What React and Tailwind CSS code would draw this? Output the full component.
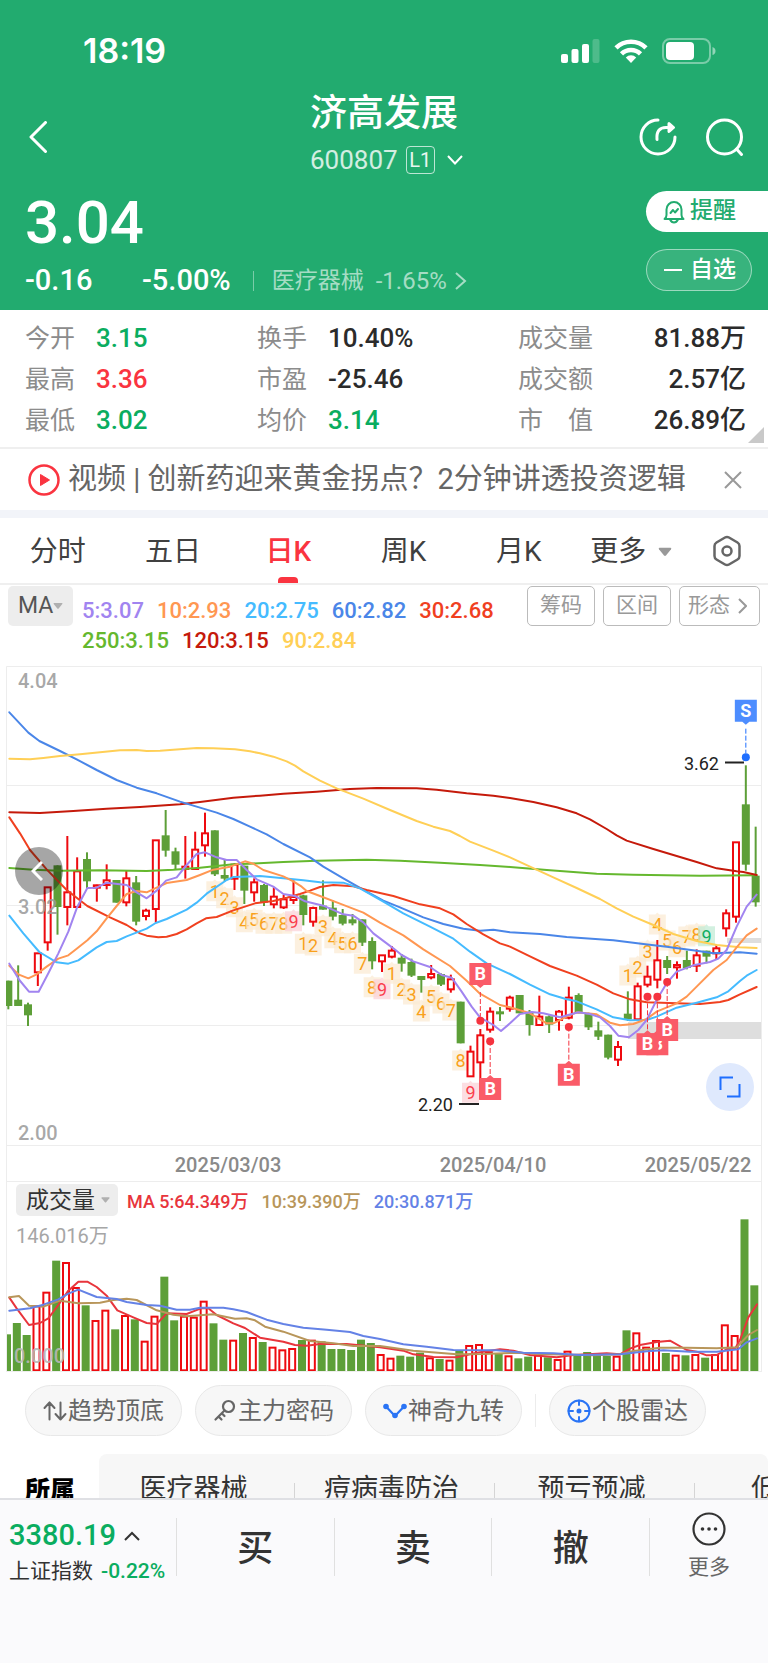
import React, { useState } from "react";

const FONT = "font-['Roboto','Noto_Sans_CJK_SC',sans-serif]";

// Chart data. All points are in thirds of a chart unit.
// [up, high, body top, body bottom, low, volume top]
const candles = [
  [0, 962, 962, 1038, 1048, 553], [0, 916, 1019, 1038, 1038, 519], [0, 1028, 1033, 1066, 1098, 555],
  [1, 880, 880, 937, 978, 466], [1, 682, 682, 847, 872, 425], [0, 616, 616, 741, 824, 332],
  [1, 528, 697, 741, 796, 336], [1, 592, 634, 741, 741, 411], [0, 577, 597, 664, 684, 466],
  [1, 674, 676, 683, 725, 510], [1, 613, 661, 675, 688, 479], [0, 660, 660, 728, 728, 538],
  [1, 633, 655, 727, 739, 495], [0, 648, 667, 785, 796, 508], [1, 746, 752, 768, 781, 572],
  [1, 541, 541, 747, 788, 497], [0, 450, 526, 572, 590, 380], [0, 563, 574, 614, 628, 511],
  [1, 528, 620, 627, 656, 497], [1, 515, 569, 627, 627, 500], [1, 458, 520, 556, 590, 452],
  [0, 511, 511, 643, 648, 520], [0, 600, 645, 656, 664, 569], [1, 610, 614, 656, 690, 569],
  [0, 617, 617, 692, 732, 549], [1, 655, 667, 697, 725, 561], [0, 672, 675, 728, 738, 576],
  [1, 682, 710, 733, 745, 590], [1, 705, 718, 742, 747, 598], [1, 661, 711, 720, 732, 594],
  [0, 704, 706, 765, 796, 570], [1, 740, 744, 785, 800, 569], [0, 661, 737, 749, 749, 574],
  [0, 721, 743, 770, 781, 597], [0, 747, 765, 791, 796, 597], [0, 762, 778, 790, 796, 600],
  [0, 778, 778, 848, 858, 569], [0, 832, 843, 904, 928, 579], [1, 886, 886, 904, 936, 612],
  [1, 858, 872, 890, 895, 623], [0, 882, 893, 911, 935, 617], [0, 896, 906, 947, 951, 620],
  [0, 948, 948, 960, 998, 608], [1, 915, 942, 952, 958, 622], [0, 940, 942, 974, 978, 627],
  [1, 944, 958, 988, 998, 629], [0, 1025, 1025, 1150, 1150, 602], [1, 1157, 1175, 1249, 1249, 585],
  [1, 1107, 1126, 1207, 1318, 582], [1, 1042, 1055, 1109, 1118, 604], [0, 1041, 1054, 1063, 1083, 610],
  [1, 1007, 1013, 1046, 1055, 616], [0, 1005, 1005, 1060, 1060, 625], [0, 1050, 1058, 1095, 1127, 620],
  [1, 1007, 1070, 1095, 1098, 614], [0, 1066, 1069, 1094, 1119, 622], [1, 1050, 1055, 1080, 1112, 627],
  [1, 980, 1013, 1073, 1078, 602], [0, 1000, 1005, 1060, 1060, 612], [0, 1058, 1062, 1102, 1110, 606],
  [0, 1085, 1111, 1130, 1140, 615], [0, 1124, 1124, 1193, 1198, 618], [1, 1143, 1161, 1199, 1218, 617],
  [0, 994, 1061, 1078, 1083, 541], [1, 968, 979, 1078, 1078, 547], [1, 917, 950, 974, 982, 590],
  [1, 840, 901, 959, 985, 570], [0, 888, 900, 924, 942, 609], [1, 904, 915, 922, 956, 614],
  [0, 872, 900, 924, 928, 616], [1, 868, 886, 917, 936, 612], [0, 872, 872, 890, 910, 623],
  [1, 854, 865, 880, 900, 612], [1, 748, 760, 805, 830, 523], [1, 547, 547, 770, 788, 555],
  [0, 316, 433, 614, 632, 208], [0, 500, 647, 727, 740, 406],
];

const priceLines = [
  ["#65b82e", "28,624 100,629 180,632 300,631 440,633 520,629 600,623 700,613 750,611 850,606 950,602 1100,599 1200,602 1320,608 1440,615 1530,621 1650,631 1790,641 1900,644 2100,647 2270,646"],
  ["#c51a0b", "28,457 120,459 220,453 320,446 420,441 540,433 600,426 700,413 780,407 850,401 950,395 1050,387 1130,384 1250,385 1310,389 1400,400 1480,407 1530,414 1600,426 1670,442 1730,460 1770,478 1820,507 1850,526 1880,542 1960,567 2030,588 2090,606 2150,625 2210,634 2230,636 2270,645"],
  ["#4a86e8", "28,157 85,218 118,243 180,273 230,298 290,330 350,360 410,383 470,400 540,425 600,443 650,458 700,477 750,500 800,523 850,552 930,592 970,620 1030,655 1100,695 1150,722 1200,742 1270,772 1330,792 1390,806 1440,812 1480,809 1530,817 1620,822 1700,831 1840,841 1930,852 2000,860 2090,872 2140,880 2220,877 2270,881"],
  ["#ffcf56", "28,296 90,298 130,294 180,288 240,283 300,277 360,271 410,270 440,273 480,272 540,268 590,264 640,265 705,268 750,274 780,280 820,290 860,304 885,317 910,334 960,362 1010,385 1090,416 1170,450 1250,483 1300,500 1350,513 1380,528 1410,545 1480,572 1530,592 1590,620 1660,652 1730,684 1800,717 1850,745 1900,770 1960,795 2020,822 2090,843 2150,855 2220,862 2270,864"],
  ["#f0401f", "28,472 60,520 90,570 140,628 200,690 262,738 330,772 380,795 420,820 440,827 475,832 500,830 530,822 560,808 590,790 618,775 650,771 700,751 765,730 820,723 860,713 900,702 930,692 960,681 1000,675 1060,679 1100,690 1180,708 1260,733 1320,745 1360,763 1400,792 1450,823 1500,850 1530,860 1590,889 1650,918 1730,947 1790,974 1840,1000 1890,1018 1940,1027 2030,1030 2100,1032 2160,1026 2185,1020 2220,1003 2270,981"],
  ["#45bbff", "28,767 70,820 118,876 170,907 205,911 235,901 290,862 320,846 350,843 380,829 440,806 467,789 500,777 560,749 590,728 620,701 680,660 700,651 780,648 850,655 910,661 960,667 1030,668 1080,685 1150,725 1210,760 1290,800 1360,836 1410,875 1460,910 1530,942 1590,974 1650,1003 1700,1018 1730,1024 1790,1048 1840,1072 1890,1081 1940,1080 1970,1070 2030,1043 2090,1028 2150,1012 2185,994 2220,963 2240,947 2270,930"],
  ["#ff9752", "28,917 55,943 85,955 110,943 140,920 175,896 205,886 230,866 262,841 290,814 320,775 350,738 380,702 410,693 440,697 470,683 500,669 560,660 600,645 640,629 690,620 735,604 760,611 790,630 850,649 880,664 905,680 920,693 960,708 1020,731 1090,758 1140,788 1210,826 1270,868 1350,918 1400,962 1440,1001 1500,1035 1530,1042 1590,1060 1640,1090 1660,1090 1700,1070 1730,1057 1790,1063 1830,1088 1860,1096 1900,1092 1940,1077 1970,1055 2030,1030 2060,1010 2090,980 2140,930 2180,900 2210,862 2240,826 2270,806"],
  ["#a184f0", "28,911 58,960 87,995 116,995 145,940 175,880 205,815 232,740 262,684 290,683 320,668 380,675 410,697 440,715 470,692 498,662 530,652 560,615 590,582 615,577 650,592 680,600 710,600 740,630 770,658 820,680 850,702 885,708 915,724 970,737 1030,763 1060,767 1090,787 1120,820 1160,850 1180,865 1205,885 1240,904 1290,921 1325,945 1355,953 1385,995 1415,1040 1440,1072 1480,1095 1503,1113 1530,1090 1560,1062 1595,1056 1630,1060 1680,1072 1735,1057 1770,1062 1800,1072 1830,1098 1855,1127 1887,1132 1915,1110 1940,1080 1970,1020 2000,970 2030,935 2080,916 2130,906 2155,896 2180,870 2210,800 2240,740 2270,704"],
];

const volumeLines = [
  ["#e8353c", "28,443 50,475 87,525 120,519 145,505 175,465 205,422 235,395 262,395 290,411 320,437 352,481 400,502 440,519 470,522 500,490 560,492 580,484 605,474 625,475 650,495 700,520 735,534 780,563 850,575 885,585 920,587 960,582 1040,582 1140,592 1210,602 1240,613 1300,621 1370,622 1430,608 1500,598 1540,602 1590,615 1670,622 1720,615 1820,610 1860,613 1890,596 1920,585 1970,576 2010,572 2060,600 2090,605 2120,616 2150,615 2180,598 2205,596 2220,570 2245,502 2271,463"],
  ["#b8965a", "28,442 57,438 87,467 130,470 180,452 235,460 300,458 340,450 380,446 410,450 470,481 520,494 560,499 640,493 705,506 740,505 765,511 795,530 850,545 930,573 1000,580 1060,588 1140,588 1240,602 1370,613 1450,612 1560,608 1620,612 1780,616 1860,613 1900,603 1980,593 2060,593 2150,595 2210,592 2245,555 2271,540"],
  ["#6482e6", "28,482 90,475 130,464 175,448 205,431 235,419 290,441 350,447 380,456 440,465 480,467 530,479 570,479 600,473 670,473 700,478 740,486 800,509 850,522 910,533 980,539 1050,546 1090,558 1140,567 1210,583 1280,590 1360,600 1490,601 1570,608 1660,610 1740,615 1860,613 1940,604 1990,601 2070,605 2150,605 2215,598 2240,577 2271,565"],
];

// y centres of each run, counted 1 to 9 from the given candle
const turns = [
  { from: 21, last: "red", ys: [692, 713, 740, 785, 778, 790, 790, 790, 782] },
  { from: 30, last: "red", ys: [850, 855, 797, 833, 848, 848, 910, 980, 986] },
  { from: 39, last: "red", ys: [940, 987, 1002, 1053, 1007, 1029, 1050, 1200, 1297] },
  { from: 63, last: "green", ys: [945, 921, 873, 792, 840, 860, 828, 822, 827] },
];

const turnColors = {
  normal: ["#fbe9d2", "#f9a11b"],
  red: ["#fbd0d5", "#fa3e4e"],
  green: ["#bfe9d3", "#10ae63"],
};

// [side, candle index, dot y, box top]
const trades = [
  ["B", 48, 1082, 909],
  ["B", 49, 1144, 1254],
  ["B", 57, 1101, 1211],
  ["B", 66, 1010, 1120],
  ["B", 65, 1010, 1120],
  ["B", 67, 966, 1077],
  ["S", 75, 292, 119],
];

const UP = "#ee0a0f";
const DOWN = "#5d9f38";
const candleX = (i) => 25 + i * 29.5;

const Candle = ({ i, data }) => {
  const [up, high, top, bottom, low] = data;
  const x = candleX(i);
  if (!up) {
    return (
      <g fill={DOWN}>
        <rect x={x - 3} y={high} width="6" height={low - high} />
        <rect x={x - 12} y={top} width="24" height={bottom - top} />
      </g>
    );
  }
  return (
    <g fill={UP}>
      <rect x={x - 3} y={high} width="6" height={top - high} />
      <rect x={x - 3} y={bottom} width="6" height={low - bottom} />
      <rect x={x - 9} y={top} width="18" height={Math.max(bottom - top, 4)} fill="none" stroke={UP} strokeWidth="6" />
    </g>
  );
};

const Turn = ({ n, i, y, tone }) => {
  const [bg, color] = turnColors[tone];
  const x = candleX(i) / 3;
  const cy = y / 3;
  return (
    <g>
      <path d={`M${x - 8.5} ${cy - 9.5}h6.5l2 -2l2 2h6.5v20h-17z`} fill={bg} fillOpacity="0.7" />
      <text x={x} y={cy + 7} textAnchor="middle" fontSize="18" fill={color}>{n}</text>
    </g>
  );
};

const Trade = ({ side, i, dot, top }) => {
  const x = candleX(i) / 3;
  const y = top / 3;
  const dy = dot / 3;
  const above = top < dot;
  const fill = side === "S" ? "#4d8dff" : "#fa5b68";
  const strong = side === "S" ? "#1f6fff" : "#f5333f";
  return (
    <g>
      <path
        d={above ? `M${x} ${y + 29}V${dy - 4}` : `M${x} ${y - 4}V${dy + 4}`}
        stroke={strong}
        strokeWidth="1"
        strokeDasharray="5 2"
      />
      <circle cx={x} cy={dy} r="4" fill={strong} />
      <path
        d={above
          ? `M${x - 11} ${y}h22v22h-7.5l-3.5 3l-3.5 -3h-7.5z`
          : `M${x - 11} ${y}h7.5l3.5 -3l3.5 3h7.5v22h-22z`}
        fill={fill}
      />
      <text x={x} y={y + 17} textAnchor="middle" fontSize="18" fontWeight="700" fill="#fff">{side}</text>
    </g>
  );
};

const Lines = ({ items }) =>
  items.map(([color, points]) => (
    <polyline key={color} points={points} fill="none" stroke={color} strokeWidth="6" strokeLinejoin="round" strokeLinecap="round" />
  ));

const PriceChart = () => (
  <svg viewBox="6 6 756 516" className="block w-full" role="img" aria-label="日K">
    <g stroke="#ededed" strokeWidth="1">
      <path d="M6.5 6.5H761.5V522M6.5 6.5V522" fill="none" />
      <path d="M6 125.5H762M6 245.5H762M6 365.5H762M6 485.5H762M6 521.5H762" />
    </g>
    <g fill="#dedede">
      <rect x="628" y="362" width="133" height="17" />
      <rect x="727" y="278" width="34" height="5" />
    </g>
    {turns.map((run) =>
      run.ys.map((y, k) => (
        <Turn key={run.from + k} n={k + 1} i={run.from + k} y={y} tone={k === 8 ? run.last : "normal"} />
      ))
    )}
    <g transform="scale(0.33333)">
      {candles.map((c, i) => <Candle key={i} i={i} data={c} />)}
      <Lines items={priceLines} />
    </g>
    {trades.map(([side, i, dot, top]) => (
      <Trade key={i} side={side} i={i} dot={dot} top={top} />
    ))}
    <g fill="#222" fontSize="18">
      <text x="719" y="110" textAnchor="end">3.62</text>
      <text x="453" y="451" textAnchor="end">2.20</text>
      <path d="M725 102.500h19M459 444h20" stroke="#222" strokeWidth="2" />
    </g>
    <g fill="#999" fillOpacity="0.85" fontSize="20" fontWeight="500">
      <text x="18" y="28">4.04</text>
      <text x="18" y="254">3.02</text>
      <text x="18" y="480">2.00</text>
    </g>
    <g fill="#8a8a8a" fontSize="20" fontWeight="500" textAnchor="middle">
      <text x="228" y="512">2025/03/03</text>
      <text x="493" y="512">2025/04/10</text>
      <text x="698" y="512">2025/05/22</text>
    </g>
  </svg>
);

const VolumeChart = () => (
  <svg viewBox="7 68 754 154" className="block w-full" role="img" aria-label="成交量">
    <text x="16" y="93" fontSize="20" fill="#a6a6a6">146.016万</text>
    <g transform="scale(0.33333)">
      {candles.map(([up, , , , , top], i) => {
        const x = 21 + i * 29.5;
        return up
          ? <rect key={i} x={x - 9} y={top + 3} width="18" height={658 - top} fill="none" stroke={UP} strokeWidth="6" />
          : <rect key={i} x={x - 12} y={top} width="24" height={664 - top} fill={DOWN} />;
      })}
      <Lines items={volumeLines} />
    </g>
    <text x="14" y="213" fontSize="20" fontWeight="500" fill="#b8b8b8" fillOpacity="0.9">0.000</text>
    <path d="M7 221.500H761" stroke="#ededed" />
  </svg>
);

const Caret = ({ className }) => (
  <svg viewBox="0 0 10 6" className={className} aria-hidden="true">
    <path d="M1.200 0h7.600q1.200 0 .500 1L5.700 5.500q-.700.700-1.400 0L.700 1q-.700-1 .500-1z" fill="currentColor" />
  </svg>
);

const StatusBar = () => (
  <div className="flex h-[88px] items-center justify-between pt-[14px] pl-[83px] pr-[52px]">
    <span className="font-['Inter',sans-serif] text-[34px] leading-10 font-semibold">18:19</span>
    <div className="flex items-center gap-[14px]">
      <svg viewBox="0 0 39 24" className="h-6 w-[39px]" fill="#fff" aria-hidden="true">
        <rect x="0" y="15" width="7" height="9" rx="2" />
        <rect x="10.500" y="10" width="7" height="14" rx="2" />
        <rect x="21" y="5" width="7" height="19" rx="2" />
        <rect x="31.500" y="0" width="7" height="24" rx="2" fillOpacity="0.2" />
      </svg>
      <svg viewBox="0 0 34 24" className="h-6 w-[34px]" fill="none" stroke="#fff" strokeWidth="4.600" aria-hidden="true">
        <path d="M2 8.800a21.500 21.500 0 0 1 30 0" />
        <path d="M7.500 14.800a13.600 13.600 0 0 1 19 0" />
        <path d="M17 24l-5.200-5.600a7.600 7.600 0 0 1 10.400 0z" fill="#fff" stroke="none" />
      </svg>
      <svg viewBox="0 0 54 26" className="h-[26px] w-[54px]" aria-hidden="true">
        <rect x="1" y="1" width="47" height="24" rx="7" fill="none" stroke="#fff" strokeOpacity="0.4" strokeWidth="2" />
        <rect x="4" y="4" width="28" height="18" rx="4" fill="#fff" />
        <path d="M50.500 9v8q3-1 3-4t-3-4z" fill="#fff" fillOpacity="0.5" />
      </svg>
    </div>
  </div>
);

const Header = () => (
  <header className="bg-[#22ab6f] pb-[6px] text-white">
    <StatusBar />
    <div className="grid h-[98px] grid-cols-[1fr_auto_1fr] items-center">
      <button aria-label="返回" className="ml-7 w-5">
        <svg viewBox="0 0 20 32" className="h-8 w-5" fill="none" stroke="#fff" strokeWidth="3" strokeLinecap="round" strokeLinejoin="round">
          <path d="M17.500 1.500L3 16l14.500 14.500" />
        </svg>
      </button>
      <div className="h-24 w-[148px] pt-[2px]">
        <h1 className="h-[46px] text-center text-[37px] leading-[46px] font-medium">济高发展</h1>
        <div className="flex h-[46px] items-center">
          <span className="text-[26px] text-white/80">600807</span>
          <span className="ml-2 flex h-7 w-[29px] shrink-0 items-center justify-center rounded border border-white/70 text-[20px] text-white/90">L1</span>
          <svg viewBox="0 0 16 10" className="ml-3 h-[10px] w-4 shrink-0" fill="none" stroke="#fff" strokeWidth="2" aria-hidden="true">
            <path d="M1 1l7 7.500L15 1" />
          </svg>
        </div>
      </div>
      <div className="flex justify-end gap-[29px] pr-6">
        <button aria-label="分享">
          <svg viewBox="0 0 38 38" className="size-[38px]" fill="none" stroke="#fff" strokeWidth="3" strokeLinecap="round" strokeLinejoin="round">
            <path d="M19 2A17 17 0 1 0 36 19" />
            <path d="M18 21.500q-1-12 9-12h5" />
            <path d="M30 5.500l4.500 4-4.500 4z" fill="#fff" />
          </svg>
        </button>
        <button aria-label="搜索">
          <svg viewBox="0 0 38 38" className="size-[38px]" fill="none" stroke="#fff" strokeWidth="3" strokeLinecap="round">
            <circle cx="18.500" cy="19" r="17" />
            <path d="M30.500 31l5 5.500" />
          </svg>
        </button>
      </div>
    </div>

    <div className="flex justify-between pl-[25px]">
      <div>
        <div className="h-[72px] pt-px text-[60px] leading-[72px] font-medium">3.04</div>
        <div className="flex h-[46px] items-center">
          <span className="w-[117px] text-[29px] font-medium">-0.16</span>
          <span className="text-[29px] font-medium">-5.00%</span>
          <i className="ml-[22px] h-5 w-px bg-white/40" />
          <a href="#sector" className="ml-[18px] flex items-center text-white/60">
            <span className="text-[23px]">医疗器械</span>
            <span className="ml-3 text-[24px]">-1.65%</span>
            <svg viewBox="0 0 12 18" className="ml-2 h-[18px] w-3" fill="none" stroke="currentColor" strokeWidth="2" aria-hidden="true">
              <path d="M1 1l9 8-9 8" />
            </svg>
          </a>
        </div>
      </div>
      <div className="flex flex-col items-end gap-[17px] pt-[5px]">
        <button className="flex h-[41px] items-center rounded-l-full bg-white pr-8 pl-[17px] text-[23px] font-medium text-[#22ab6f]">
          <svg viewBox="0 0 22 24" className="mr-[5px] h-6 w-[22px]" fill="none" stroke="currentColor" strokeWidth="2" strokeLinejoin="round" strokeLinecap="round" aria-hidden="true">
            <path d="M1.500 19h19q-2-1.500-2-4V9.500a7.500 7.500 0 0 0-15 0V15q0 2.500-2 4z" />
            <path d="M7 19.500q1.500 3 4 3t4-3" />
            <path d="M7.500 13l2.500-3 2 2.500 3-3.500" />
          </svg>
          提醒
        </button>
        <button className="mr-4 flex h-[42px] items-center rounded-full border border-white/50 bg-white/10 pr-[15px] pl-[17px] text-[23px] font-medium">
          <i className="mr-[8px] h-[2px] w-[18px] bg-white" />
          自选
        </button>
      </div>
    </div>
  </header>
);

const stats = [
  ["今开", "3.15", "text-[#0aad60]"], ["换手", "10.40%", "text-[#2b2b2b]"], ["成交量", "81.88万", "text-[#2b2b2b]"],
  ["最高", "3.36", "text-[#fa3440]"], ["市盈", "-25.46", "text-[#2b2b2b]"], ["成交额", "2.57亿", "text-[#2b2b2b]"],
  ["最低", "3.02", "text-[#0aad60]"], ["均价", "3.14", "text-[#0aad60]"], ["市　值", "26.89亿", "text-[#2b2b2b]"],
];

const Stats = () => (
  <dl className="relative grid grid-cols-[232fr_261fr_228fr] border-b-2 border-[#efefef] bg-white pt-2 pr-[22px] pb-[6px] pl-[25px]">
    {stats.map(([label, value, color], i) => (
      <div key={label} className={`flex h-[41px] items-center ${i % 3 === 2 ? "justify-between" : "gap-[21px]"}`}>
        <dt className="text-[25px] text-[#8c8c8c]">{label}</dt>
        <dd className={`text-[26px] font-medium ${color}`}>{value}</dd>
      </div>
    ))}
    <svg viewBox="0 0 16 16" className="absolute right-1 bottom-1 size-4" aria-hidden="true">
      <path d="M16 0v16H0z" fill="#c9c9c9" />
    </svg>
  </dl>
);

const News = () => (
  <div className="flex h-[61px] items-center bg-white pt-px pr-[26px] pl-7">
    <svg viewBox="0 0 32 32" className="size-8" aria-hidden="true">
      <circle cx="16" cy="16" r="14.500" fill="none" stroke="#fa3440" strokeWidth="2.500" />
      <path d="M12.500 10.500v11l9-5.500z" fill="#fa3440" stroke="#fa3440" strokeLinejoin="round" />
    </svg>
    <a href="#news" className="ml-2 flex-1 whitespace-nowrap text-[29px] text-[#666]">视频 | 创新药迎来黄金拐点？2分钟讲透投资逻辑</a>
    <button aria-label="关闭">
      <svg viewBox="0 0 18 18" className="size-[18px]" stroke="#999" strokeWidth="2">
        <path d="M1 1l16 16M17 1L1 17" />
      </svg>
    </button>
  </div>
);

const Tabs = () => {
  const [active, setActive] = useState("日K");
  return (
    <nav className="grid h-[67px] grid-cols-[repeat(5,115fr)_109fr_82fr] border-b-2 border-[#efefef] bg-white text-[28px] text-[#404040]">
      {["分时", "五日", "日K", "周K", "月K"].map((t) => (
        <button key={t} onClick={() => setActive(t)} className={`relative pt-[2px] ${t === active ? "font-medium text-[#fa3440]" : ""}`}>
          {t}
          {t === active && <i className="absolute bottom-0 left-1/2 h-[6px] w-5 -translate-x-1/2 rounded-t bg-[#fa3440]" />}
        </button>
      ))}
      <button className="flex items-center justify-center gap-3 pt-[2px]">
        更多
        <Caret className="h-[10px] w-[14px] text-[#999]" />
      </button>
      <button aria-label="设置" className="flex items-center justify-center">
        <svg viewBox="0 0 28 32" className="h-8 w-7" fill="none" stroke="#666" strokeWidth="2.500" strokeLinejoin="round">
          <path d="M12 2.500q2-1.200 4 0l8.500 5q2 1.200 2 3.500v10q0 2.300-2 3.500l-8.500 5q-2 1.200-4 0l-8.500-5q-2-1.200-2-3.500V11q0-2.300 2-3.500z" />
          <circle cx="14" cy="16" r="4.500" />
        </svg>
      </button>
    </nav>
  );
};

const averages = [
  ["5:3.07", "text-[#a184f0]"], ["10:2.93", "text-[#ff9752]"], ["20:2.75", "text-[#45bbff]"],
  ["60:2.82", "text-[#4a86e8]"], ["30:2.68", "text-[#f0401f]"], ["250:3.15", "text-[#65b82e]"],
  ["120:3.15", "text-[#c51a0b]"], ["90:2.84", "text-[#ffcf56]"],
];

const Averages = () => (
  <div className="flex items-start bg-white pt-px pr-2 pb-[10px] pl-2">
    <div className="relative">
      <select aria-label="指标" className="h-10 w-[65px] appearance-none rounded-[5px] bg-[#ededed] pl-[10px] text-[23px] text-[#555]">
        <option>MA</option>
      </select>
      <Caret className="pointer-events-none absolute top-[17px] right-[10px] h-[6px] w-[10px] text-[#b0b0b0]" />
    </div>
    <div className="ml-[9px] flex flex-1 flex-wrap gap-x-[13px] pt-[10px] text-[22px] leading-[30px] font-medium">
      {averages.map(([text, color]) => <span key={text} className={color}>{text}</span>)}
    </div>
    <div className="flex gap-2 text-[21px] text-[#999]">
      <button className="h-10 rounded-[5px] border border-[#bbb] px-3">筹码</button>
      <button className="h-10 rounded-[5px] border border-[#bbb] px-3">区间</button>
      <button className="flex h-10 items-center gap-2 rounded-[5px] border border-[#bbb] pr-3 pl-2">
        形态
        <svg viewBox="0 0 9 16" className="h-4 w-[9px]" fill="none" stroke="currentColor" strokeWidth="2" aria-hidden="true">
          <path d="M1 1l7 7-7 7" />
        </svg>
      </button>
    </div>
  </div>
);

const Charts = () => (
  <section className="bg-white px-[6px]">
    <div className="relative">
      <PriceChart />
      <button aria-label="向左" className="absolute top-[35%] left-[9px] flex size-12 items-center justify-center rounded-full bg-black/35">
        <svg viewBox="0 0 12 20" className="mr-1 h-5 w-3" fill="none" stroke="#fff" strokeWidth="3">
          <path d="M11 1L2 10l9 9" />
        </svg>
      </button>
      <button aria-label="全屏" className="absolute top-[77%] right-2 flex size-12 items-center justify-center rounded-full bg-[#dfe9fd]">
        <svg viewBox="0 0 22 22" className="size-[22px]" fill="none" stroke="#1f6fff" strokeWidth="2">
          <path d="M14 1.500H1.500V14M8 20.500h12.500V8" />
        </svg>
      </button>
    </div>
    <div className="border-x border-[#ededed]">
      <div className="flex h-9 items-center pl-[9px]">
        <div className="relative">
          <select aria-label="副图指标" className="h-8 w-[102px] appearance-none rounded-[5px] bg-[#ededed] pl-[10px] text-[23px] text-[#333]">
            <option>成交量</option>
          </select>
          <Caret className="pointer-events-none absolute top-[13px] right-2 h-[6px] w-[9px] text-[#b0b0b0]" />
        </div>
        <div className="ml-[9px] flex gap-[13px] pt-[3px] text-[18px] font-medium">
          <span className="text-[#e8353c]">MA 5:64.349万</span>
          <span className="text-[#b8965a]">10:39.390万</span>
          <span className="text-[#6482e6]">20:30.871万</span>
        </div>
      </div>
      <VolumeChart />
    </div>
  </section>
);

const Chip = ({ children, label }) => (
  <button className="flex h-[51px] items-center gap-px rounded-full border border-[#e8e8e8] bg-[#f7f7f7] px-[17px] text-[24px] whitespace-nowrap text-[#666]">
    <svg viewBox="0 0 24 24" className="size-6" fill="none" strokeLinecap="round" strokeLinejoin="round" aria-hidden="true">{children}</svg>
    {label}
  </button>
);

const Tools = () => (
  <div className="flex items-center gap-[13px] bg-white pt-[13px] pb-[18px] pl-[25px]">
    <Chip label="趋势顶底">
      <path d="M6.500 20.500V3.500M1.500 9l5-5.500L11.500 9M17.500 3.500v17M12.500 15l5 5.500 5-5.500" stroke="#666" strokeWidth="2" />
    </Chip>
    <Chip label="主力密码">
      <g stroke="#666" strokeWidth="2.200">
        <circle cx="15.500" cy="7.500" r="5.500" />
        <path d="M11.500 11.500L2.500 20.500M5.500 17.500l3 3M9 14.500l2.500 2.500" />
      </g>
    </Chip>
    <Chip label="神奇九转">
      <path d="M3 7.500l9 9.500 9-9.500" stroke="#2a74f5" strokeWidth="2.200" />
      <g fill="#2a74f5">
        <circle cx="3" cy="7.500" r="2.800" />
        <circle cx="21" cy="7.500" r="2.800" />
        <circle cx="12" cy="16.500" r="2.800" />
      </g>
    </Chip>
    <i className="h-[33px] w-px bg-[#ececec]" />
    <Chip label="个股雷达">
      <g stroke="#2a74f5" strokeWidth="2">
        <circle cx="12" cy="12" r="10.500" />
        <path d="M12 1.500v4.500M12 18v4.500M1.500 12h4.500M18 12h4.500" />
        <circle cx="12" cy="12" r="1.500" fill="#2a74f5" />
      </g>
    </Chip>
  </div>
);

const Sectors = () => (
  <div className="flex h-11 overflow-hidden bg-white whitespace-nowrap">
    <b className="w-[99px] shrink-0 pl-[25px] text-[25px] leading-[74px] font-black text-black">所属</b>
    <ul className="flex flex-1 items-start overflow-hidden rounded-t-lg bg-[#f7f7f7] text-[27px] leading-[70px] text-[#333]">
      {["医疗器械", "痘病毒防治", "预亏预减", "低价股"].map((name, i) => (
        <li key={name} className={`flex shrink-0 justify-center ${i > 0 ? "w-[200px]" : "w-[195px]"}`}>
          {i > 0 && <i className="mt-[29px] h-6 w-px bg-[#d5d5d5]" />}
          <a href="#sector" className="flex-1 pr-[6px] text-center">{name}</a>
        </li>
      ))}
    </ul>
  </div>
);

const Footer = () => (
  <footer className="flex h-[165px] border-t-2 border-[#dfe0e4] bg-[#fafafc] pt-[18px]">
    <div className="h-[58px] w-[177px] border-r border-[#e0e0e0] pl-[9px] whitespace-nowrap">
      <div className="flex h-9 items-center gap-2 text-[29px] font-medium text-[#0aad60]">
        3380.19
        <svg viewBox="0 0 16 10" className="h-[10px] w-4" fill="none" stroke="#333" strokeWidth="2" aria-hidden="true">
          <path d="M1 9l7-7 7 7" />
        </svg>
      </div>
      <div className="flex h-9 items-center gap-2 text-[21px]">
        <span className="text-[#333]">上证指数</span>
        <span className="font-medium text-[#0aad60]">-0.22%</span>
      </div>
    </div>
    {["买", "卖", "撤"].map((t) => (
      <button key={t} className="h-[58px] flex-1 border-r border-[#e0e0e0] pt-[3px] text-[36px] font-medium text-[#333]">{t}</button>
    ))}
    <button className="-mt-[6px] flex h-[72px] w-[118px] flex-col items-center text-[21px] text-[#666]">
      <svg viewBox="0 0 34 34" className="size-[34px]" aria-hidden="true">
        <circle cx="17" cy="17" r="15.500" fill="none" stroke="#333" strokeWidth="2.200" />
        <g fill="#333">
          <circle cx="10.500" cy="17" r="1.800" />
          <circle cx="17" cy="17" r="1.800" />
          <circle cx="23.500" cy="17" r="1.800" />
        </g>
      </svg>
      <span className="mt-[6px]">更多</span>
    </button>
  </footer>
);

export default function App() {
  return (
    <main className={`min-h-screen bg-[#fafafc] ${FONT}`}>
      <Header />
      <Stats />
      <News />
      <div className="h-2 bg-[#f2f4f9]" />
      <Tabs />
      <Averages />
      <Charts />
      <Tools />
      <Sectors />
      <Footer />
    </main>
  );
}
